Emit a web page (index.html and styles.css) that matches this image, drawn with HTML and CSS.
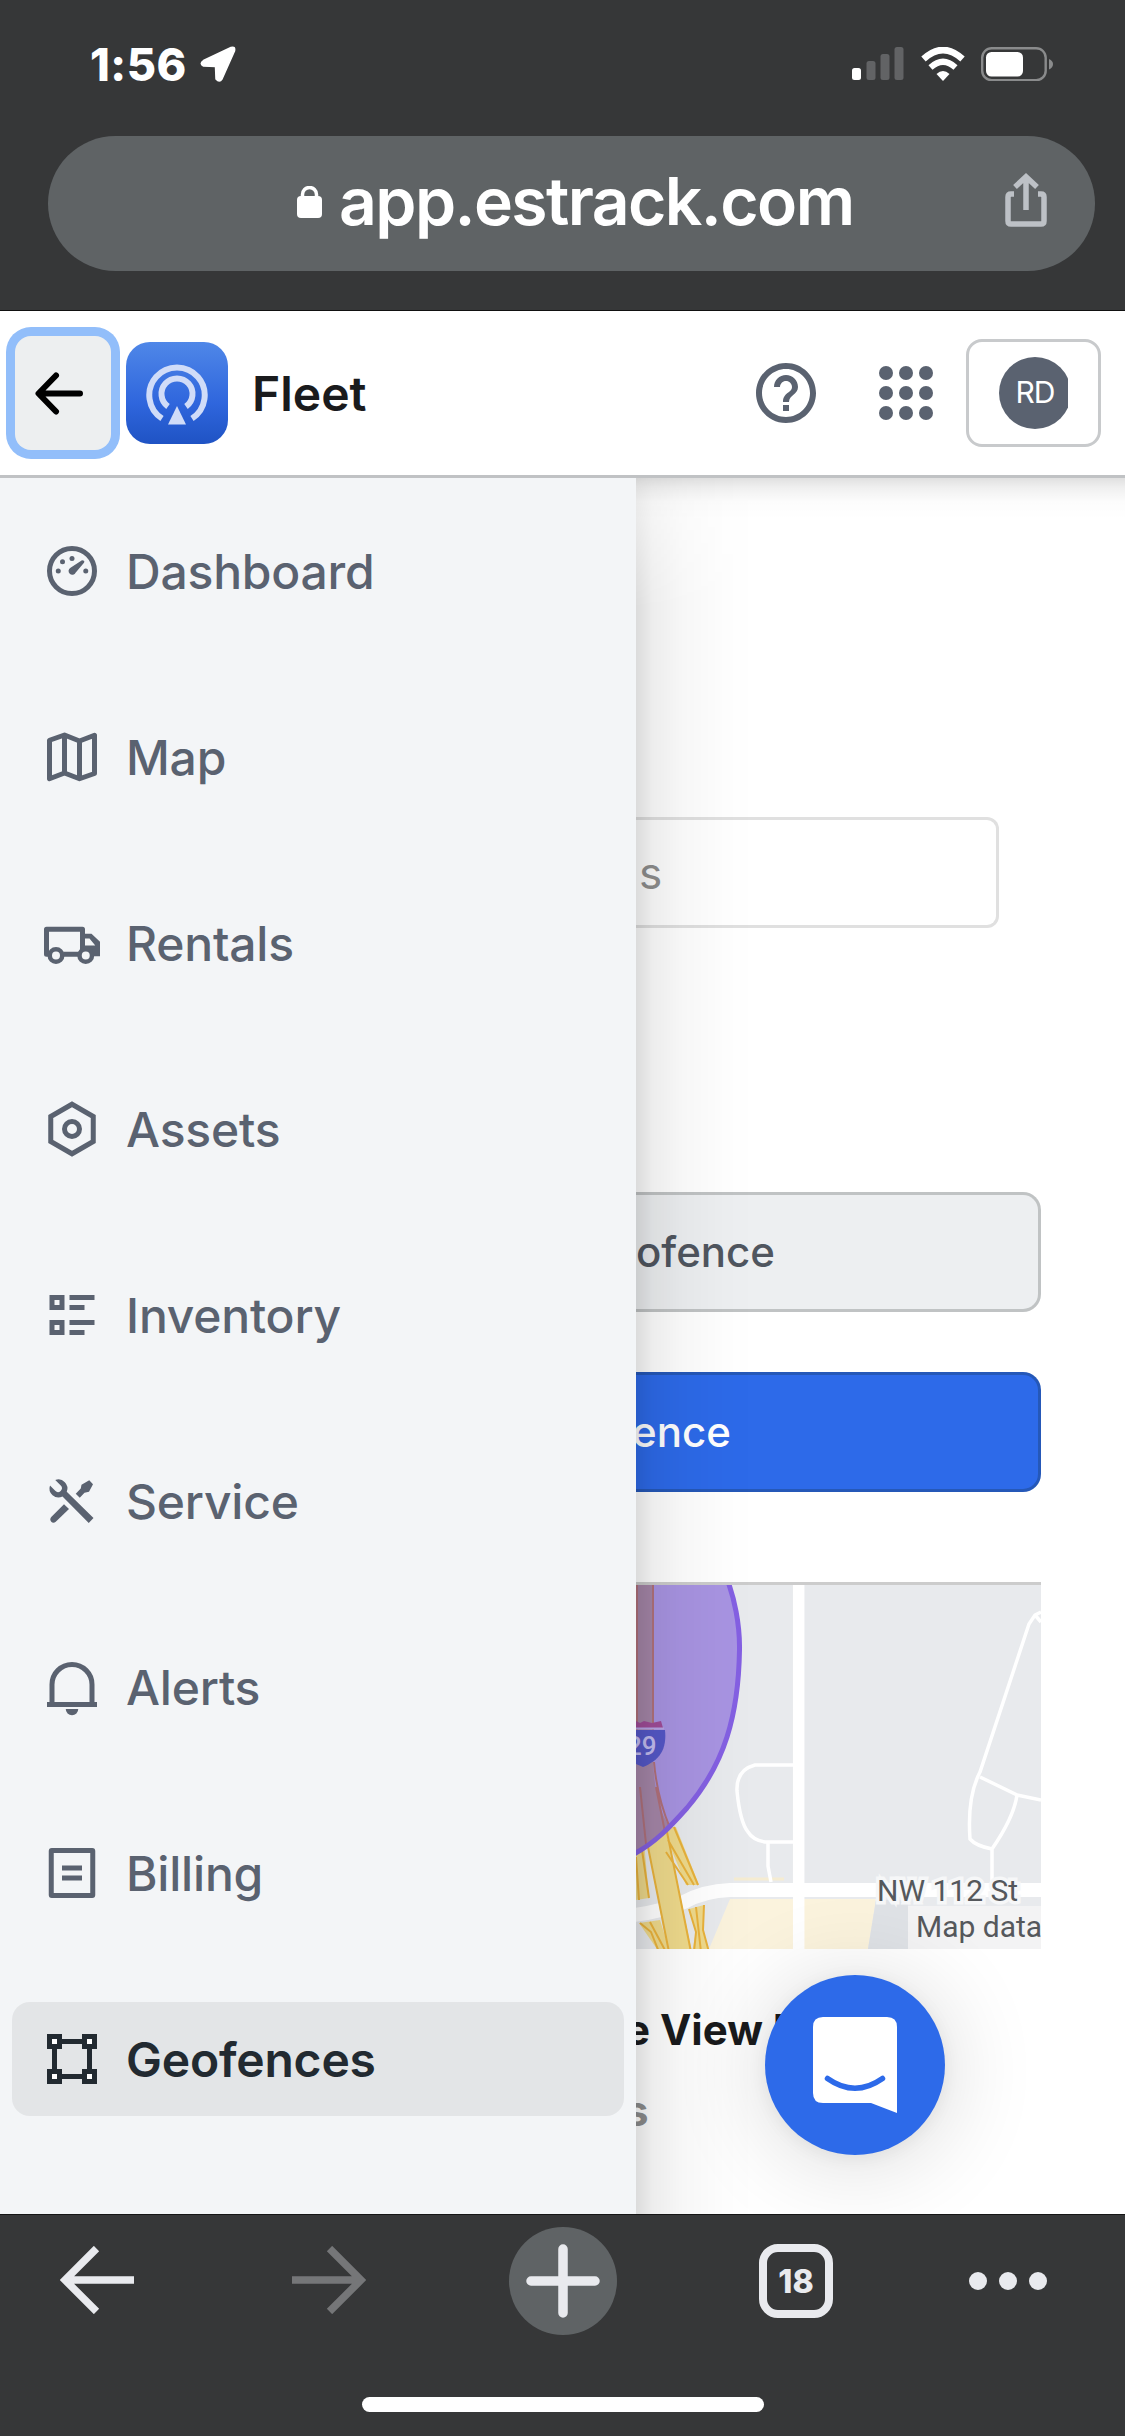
FILE: index.html
```html
<!DOCTYPE html>
<html lang="en">

<head>
    <meta charset="UTF-8">
    <meta name="viewport" content="width=device-width, initial-scale=1.0">
    <title>Fleet - Geofences</title>
    <link rel="stylesheet" href="styles.css">
</head>

<body>
    <!-- Phone status bar and address bar -->
    <div class="browser-top">
        <div class="status-bar">
            <div class="status-left">
                <span class="clock">1:56</span>
                <svg class="location" viewBox="0 0 36 36">
                    <path d="M3.500 14.500 L31 1.500 Q35.500 0 34.500 5 L22 33 Q19.500 37 16 33 L15.500 20.500 L3.500 20 Q-1 17.500 3.500 14.500Z" fill="#fff" stroke="#fff" stroke-width="1.500" stroke-linejoin="round"/>
                </svg>
            </div>
            <div class="status-right">
                <svg class="signal" viewBox="0 0 52 34">
                    <rect x="0" y="21" width="9" height="12" rx="2.5" fill="#fff"/>
                    <rect x="14.500" y="14" width="9" height="19" rx="2.500" fill="#626365"/>
                    <rect x="28.500" y="7" width="9" height="26" rx="2.500" fill="#626365"/>
                    <rect x="42.500" y="0" width="9" height="33" rx="2.500" fill="#626365"/>
                </svg>
                <svg class="wifi" viewBox="0 0 44 34" fill="none" stroke="#fff">
                    <path d="M2.500 12 Q22 -6 41.500 12" stroke-width="6.500"/>
                    <path d="M9.500 20.500 Q22 9 34.500 20.500" stroke-width="6"/>
                    <path d="M22 34 L15.500 27 Q22 21 28.500 27Z" fill="#fff" stroke="none"/>
                </svg>
                <svg class="battery" viewBox="0 0 72 34">
                    <rect x="1.200" y="1.200" width="63.500" height="32" rx="9.500" fill="none" stroke="#8a8b8c" stroke-width="2.400"/>
                    <rect x="5" y="5" width="37" height="24.500" rx="5.500" fill="#fff"/>
                    <path d="M68 12 Q72 14 72 17 Q72 20.500 68 22.500Z" fill="#8a8b8c"/>
                </svg>
            </div>
        </div>
        <div class="url-bar">
            <svg class="lock" viewBox="0 0 25 32">
                <rect x="0" y="10" width="25" height="22" rx="4" fill="#fff"/>
                <path d="M5.500 12 V8.500 a7 7 0 0 1 14 0 V12" fill="none" stroke="#fff" stroke-width="3.500"/>
            </svg>
            <span class="url">app.estrack.com</span>
            <svg class="share" viewBox="0 0 42 54" fill="none" stroke="#bdc1c6" stroke-width="5.500">
                <path d="M9 21 H6 Q3 21 3 24 V48 Q3 51 6 51 H36 Q39 51 39 48 V24 Q39 21 36 21 H33"/>
                <path d="M21 37 V5 M10 14 L21 3.800 L32 14"/>
            </svg>
        </div>
    </div>

    <!-- App header -->
    <header class="app-header">
        <button class="menu-toggle">
            <svg viewBox="0 0 48 43" fill="none" stroke="#000" stroke-width="6" stroke-linecap="round" stroke-linejoin="round">
                <path d="M45 21.500 H4 M21 3.500 L3.500 21.500 L21 39.500"/>
            </svg>
        </button>
        <div class="logo">
            <svg viewBox="0 0 62 64" fill="none" stroke="#d0dcf8" stroke-width="6">
                <path d="M16 57.500 A27.700 27.700 0 1 1 46 57.500"/>
                <path d="M22 45.500 A15.500 15.500 0 1 1 40 45.500"/>
                <path d="M31 45 L40 63.500 H22Z" fill="#d0dcf8" stroke="none"/>
            </svg>
        </div>
        <span class="brand">Fleet</span>
        <div class="header-actions">
            <svg class="help" viewBox="0 0 24 24" fill="#5a6270">
                <path d="M11 18h2v-2h-2v2zm1-16C6.480 2 2 6.480 2 12s4.480 10 10 10 10-4.480 10-10S17.520 2 12 2zm0 18c-4.410 0-8-3.590-8-8s3.590-8 8-8 8 3.590 8 8-3.590 8-8 8zm0-14c-2.210 0-4 1.790-4 4h2c0-1.100.9-2 2-2s2 .9 2 2c0 2-3 1.750-3 5h2c0-2.250 3-2.500 3-5 0-2.210-1.790-4-4-4z"/>
            </svg>
            <div class="apps">
                <i></i><i></i><i></i>
                <i></i><i></i><i></i>
                <i></i><i></i><i></i>
            </div>
            <button class="user-button">
                <span class="avatar-clip"><span class="avatar">RD</span></span>
            </button>
        </div>
    </header>

    <div class="page">
        <!-- Side navigation -->
        <nav class="sidebar">
            <a class="nav-item">
                <svg viewBox="0 0 24 24" fill="none" stroke="currentColor" stroke-width="2">
                    <circle cx="12" cy="12" r="9"/>
                    <g fill="currentColor" stroke="none">
                        <circle cx="6.500" cy="12" r="1"/>
                        <circle cx="8.200" cy="8.300" r="1"/>
                        <circle cx="12" cy="7" r="1"/>
                        <circle cx="17.500" cy="12" r="1"/>
                        <path d="M16 7.700 Q17.300 7.700 16.800 8.700 L13.500 12.600 A1.500 1.500 0 1 1 11.400 10.700Z"/>
                    </g>
                </svg>
                <span>Dashboard</span>
            </a>
            <a class="nav-item">
                <svg viewBox="0 0 24 24" fill="none" stroke="currentColor" stroke-width="2" stroke-linejoin="round">
                    <path d="M3 5.300 L9 3.200 L15 5.600 L21 3.300 V18.600 L15 20.700 L9 18.400 L3 20.700Z M9 3.200 V18.400 M15 5.600 V20.700"/>
                </svg>
                <span>Map</span>
            </a>
            <a class="nav-item">
                <svg viewBox="0 0 24 24" fill="none" stroke="currentColor">
                    <path d="M3.500 16.500 H1.800 V6.500 H16.200 V16.500 H8.500" stroke-width="2" stroke-linejoin="round"/>
                    <path d="M16 8.300 H19.800 L23.200 11.500 V17.300 H16Z M17.200 10.200 V13 H21.300 L19 10.200Z" fill="currentColor" fill-rule="evenodd" stroke="none"/>
                    <circle cx="5.600" cy="17" r="2.500" fill="#f3f5f7" stroke-width="1.800"/>
                    <circle cx="17.500" cy="17" r="2.500" fill="#f3f5f7" stroke-width="1.800"/>
                </svg>
                <span>Rentals</span>
            </a>
            <a class="nav-item">
                <svg viewBox="0 0 24 24" fill="none" stroke="currentColor" stroke-width="2">
                    <path d="M12 2.100 L20.500 7 V17 L12 21.900 L3.500 17 V7Z"/>
                    <circle cx="12" cy="12" r="3"/>
                </svg>
                <span>Assets</span>
            </a>
            <a class="nav-item">
                <svg viewBox="0 0 24 24" fill="currentColor" fill-rule="evenodd">
                    <path d="M3 4h6v6H3zM5 6v2h2V6zM11 4h10v2H11zM11 8h6v2h-6zM3 14h6v6H3zM5 16v2h2v-2zM11 14h10v2H11zM11 18h6v2h-6z"/>
                </svg>
                <span>Inventory</span>
            </a>
            <a class="nav-item">
                <svg viewBox="0 0 24 24" fill="currentColor">
                    <path d="M5.300 3.600 A3.600 3.600 0 0 1 9.900 8.300 L20.600 18.800 L18.700 20.800 L8.200 10.200 A3.600 3.600 0 0 1 3.200 5.800 L5.300 7.900 A1.500 1.500 0 0 0 7.500 5.800Z"/>
                    <path d="M13.500 9.100 L15.500 7 L15.800 5.500 L18.900 3.700 L20.400 5.300 L18.800 8.300 L17 8.700 L15.100 10.700Z"/>
                    <path d="M8.800 13.300 L10.800 15.200 L5.500 20.300 Q4.500 21.100 3.700 20.300 Q2.900 19.400 3.700 18.400Z"/>
                </svg>
                <span>Service</span>
            </a>
            <a class="nav-item">
                <svg viewBox="0 0 24 24" fill="none" stroke="currentColor" stroke-width="2">
                    <path d="M4 19 V11 a8 8 0 0 1 16 0 V19 M2 19 H22"/>
                    <path d="M9.500 20.800 H14.500 A2.500 2.500 0 0 1 9.500 20.800Z" fill="currentColor" stroke="none"/>
                </svg>
                <span>Alerts</span>
            </a>
            <a class="nav-item">
                <svg viewBox="0 0 24 24" fill="none" stroke="currentColor" stroke-width="2">
                    <rect x="3.700" y="3" width="16.600" height="18" rx="0.200"/>
                    <path d="M8 10 H16 M8 14 H16"/>
                </svg>
                <span>Billing</span>
            </a>
            <a class="nav-item active">
                <svg viewBox="0 0 24 24" fill="none" stroke="currentColor" stroke-width="2">
                    <path d="M8 5 H16 M8 19 H16 M5 8 V16 M19 8 V16"/>
                    <g fill="#fff">
                        <rect x="3" y="3" width="4" height="4"/>
                        <rect x="17" y="3" width="4" height="4"/>
                        <rect x="3" y="17" width="4" height="4"/>
                        <rect x="17" y="17" width="4" height="4"/>
                    </g>
                </svg>
                <span>Geofences</span>
            </a>
        </nav>

        <!-- Page content, partly under the open menu -->
        <main class="content">
            <div class="search-box">s</div>
            <div class="btn btn-default">ofence</div>
            <div class="btn btn-primary">ence</div>
            <svg class="map" viewBox="0 3 405 364">
                <rect width="405" height="370" fill="#e8eaed"/>
                <path d="M94 317 H157 V367 H73Z M168 317 H240 L232 367 H168Z" fill="#fbf3dd"/>
                <path d="M240 318 H272 V367 H232Z" fill="#dfe2e6"/>
                <path d="M98 297 H148" stroke="#f5ecd2" stroke-width="3"/>
                <!-- streets -->
                <g fill="none" stroke="#fff">
                    <path d="M162.700 0 V370" stroke-width="11.500"/>
                    <path d="M-2 333 Q24 330 48 320 Q68 309 94 308 H405" stroke-width="14"/>
                    <path d="M157 183 H119 Q100 188 101 209 Q104 240 112 250 Q117 258 129 260 H157 M132 260 V284 L135 300" stroke-width="3.500"/>
                    <path d="M405 30 L399 33 L393 42 L344 190 Q331 215 334 257 Q340 264 356 267 Q378 235 381 213 L344 195 M399 33 L405 40 M381 213 L405 218 M356 267 V300" stroke-width="3.500"/>
                </g>
                <!-- interstate and ramps -->
                <g fill="#efda8c">
                    <path d="M9 250 L32 370 H56 L30 245Z"/>
                    <path d="M26 245 L50 303 H63 L40 245Z"/>
                    <path d="M0 260 V318 L13 316 L8 260Z"/>
                    <path d="M53 327 L68 323 L67 348 L73 370 H56 L60 350Z"/>
                    <path d="M3 341 L24 338 L34 370 H23Z"/>
                </g>
                <path d="M9 250 L33 370 M30 245 L55 370 M38 245 L62 303 M30 270 L52 303 M32 258 L58 303 M0 275 L3 318 M6 268 L13 316 M53 327 L60 350 L58 370 M68 323 L67 348 L73 370 M60 325 L65 370 M4 341 L15 350 L23 370 M14 340 L30 370" stroke="#e9b23c" stroke-width="2" fill="none"/>
                <!-- geofence area -->
                <path d="M91 -3 C98 15 104 42 103.500 68 C103 100 99 130 91 155 C83 180 68 206 51 226 C34 245 18 262 -4 273 V-3Z" fill="#a894e2"/>
                <path d="M0 0 H17 V178 Q19 225 34 245 Q20 262 0 270Z" fill="#a586a8"/>
                <path d="M17 0 V150 M18 180 Q21 215 34 246 M1 0 V180 M4 205 L10 262 M20 205 L29 250" fill="none" stroke="#b0717b" stroke-width="2"/>
                <path d="M91 -3 C98 15 104 42 103.500 68 C103 100 99 130 91 155 C83 180 68 206 51 226 C34 245 18 262 -4 273" fill="none" stroke="#8460e2" stroke-width="5"/>
                <path d="M0 139 L4 141 L8 139 L16 141 L25 139 L27 146 H0Z" fill="#a04c98"/>
                <path d="M0 146.500 H28" stroke="#b9a5e6" stroke-width="2"/>
                <path d="M0 148 H29 C31 167 24 178 7 185 L0 182Z" fill="#5558c8"/>
                <text x="-9" y="173" class="map-shield">29</text>
                <rect x="272" y="324" width="133" height="43" fill="#f5f5f5" fill-opacity=".85"/>
                <text x="241" y="319" class="map-label street">NW 112 St</text>
                <text x="280" y="355" class="map-label">Map data</text>
            </svg>
            <div class="card-title">e View P</div>
            <div class="card-sub">s</div>
            <div class="chat-launcher">
                <svg viewBox="0 0 84 96">
                    <path d="M10 0 H74 Q84 0 84 10 V96 L58 86 H10 Q0 86 0 76 V10 Q0 0 10 0Z" fill="#fff"/>
                    <path d="M14.500 61.500 Q42 81 69.500 61.500" fill="none" stroke="#2d6ae9" stroke-width="5.500" stroke-linecap="round"/>
                </svg>
            </div>
        </main>
    </div>

    <!-- Browser toolbar -->
    <div class="browser-bottom">
        <div class="toolbar">
            <svg class="arrow" viewBox="0 0 74 68" fill="none" stroke="#e9eaee" stroke-width="7.500">
                <path d="M74 34 H6 M36.500 2.500 L5 34 L36.500 65.500"/>
            </svg>
            <svg class="arrow forward" viewBox="0 0 74 68" fill="none" stroke="#757678" stroke-width="7.500">
                <path d="M0 34 H68 M37.500 2.500 L69 34 L37.500 65.500"/>
            </svg>
            <div class="new-tab">
                <svg viewBox="0 0 74 74" stroke="#e9eaee" stroke-width="9.500" stroke-linecap="round">
                    <path d="M37 5 V69 M5 37 H69"/>
                </svg>
            </div>
            <div class="tab-count">18</div>
            <div class="more"><i></i><i></i><i></i></div>
        </div>
        <div class="home-indicator"></div>
    </div>
</body>

</html>
```
FILE: styles.css
```css
* {
    box-sizing: border-box;
}

body {
    margin: 0;
    width: 1125px;
    height: 2436px;
    overflow: hidden;
    display: flex;
    flex-direction: column;
    font-family: Inter, "Liberation Sans", sans-serif;
    background-color: #ffffff;
}

svg {
    display: block;
    flex-shrink: 0;
}

button {
    font-family: inherit;
    padding: 0;
}

/* Status bar and address bar */
.browser-top {
    height: 311px;
    background-color: #363738;
    border-bottom: 1px solid #111111;
}

.status-bar {
    height: 136px;
    padding: 36px 72px 0 90px;
    display: flex;
    justify-content: space-between;
}

.status-left,
.status-right {
    display: flex;
    height: 56px;
    align-items: center;
}

.clock {
    color: #ffffff;
    font-size: 45px;
    font-weight: 800;
    width: 110px;
    letter-spacing: 0.5px;
}

.location {
    width: 36px;
    height: 36px;
}

.signal {
    width: 52px;
    height: 34px;
    margin-right: 17px;
}

.wifi {
    width: 44px;
    height: 34px;
    margin-right: 16px;
}

.battery {
    width: 72px;
    height: 34px;
}

.url-bar {
    height: 135px;
    margin: 0 30px 0 48px;
    padding: 0 48px 0 249px;
    border-radius: 68px;
    background-color: #5f6365;
    display: flex;
    align-items: center;
}

.lock {
    width: 25px;
    height: 32px;
    margin-right: 17px;
    margin-bottom: 4px;
}

.url {
    color: #ffffff;
    font-size: 66px;
    font-weight: 600;
    letter-spacing: -1.6px;
    white-space: nowrap;
    margin-bottom: 5px;
}

.share {
    width: 42px;
    height: 54px;
    margin-left: auto;
    margin-bottom: 8px;
}

/* App header */
.app-header {
    position: relative;
    z-index: 3;
    height: 167px;
    padding: 0 24px 0 15px;
    background-color: #ffffff;
    border-bottom: 3px solid #c0c2c4;
    display: flex;
    align-items: center;
}

.menu-toggle {
    width: 96px;
    height: 114px;
    border: none;
    border-radius: 16px;
    background-color: #edeff0;
    box-shadow: 0 0 0 9px #92befa;
    display: flex;
    align-items: center;
    padding-left: 20px;
}

.menu-toggle svg {
    width: 48px;
    height: 43px;
}

.logo {
    width: 102px;
    height: 102px;
    margin-left: 15px;
    border-radius: 24px;
    background: linear-gradient(#4f87e8, #2f66dd 60%, #1f53c4);
    display: flex;
    align-items: center;
    justify-content: center;
}

.logo svg {
    width: 62px;
    height: 64px;
}

.brand {
    margin-left: 24px;
    font-size: 48px;
    font-weight: 600;
    color: #1a1b1d;
}

.header-actions {
    display: flex;
    align-items: center;
    margin-left: auto;
}

.help {
    width: 72px;
    height: 72px;
}

.apps {
    display: grid;
    grid-template-columns: repeat(3, 14px);
    gap: 6px;
    margin: 0 33px 0 57px;
}

.apps i {
    width: 14px;
    height: 14px;
    border-radius: 50%;
    background-color: #5a6270;
}

.user-button {
    width: 135px;
    height: 108px;
    border: 3px solid #c8cacc;
    border-radius: 16px;
    background-color: #ffffff;
    padding-left: 30px;
}

.avatar-clip {
    display: block;
    width: 69px;
    overflow: hidden;
}

.avatar {
    display: flex;
    align-items: center;
    justify-content: center;
    width: 72px;
    height: 72px;
    border-radius: 50%;
    background-color: #5a6270;
    color: #ffffff;
    font-size: 30px;
    letter-spacing: -1px;
    padding-bottom: 2px;
}

/* Page */
.page {
    height: 1736px;
    display: flex;
}

.sidebar {
    position: relative;
    z-index: 2;
    width: 636px;
    padding: 36px 12px;
    background-color: #f3f5f7;
    display: flex;
    flex-direction: column;
    gap: 72px;
}

/* Shadow cast by the menu, weaker near the header */
.sidebar::after {
    content: "";
    position: absolute;
    top: 0;
    left: 100%;
    width: 120px;
    height: 100%;
    background: linear-gradient(90deg, rgba(0, 0, 0, 0.14), rgba(0, 0, 0, 0.07) 14%, rgba(0, 0, 0, 0.03) 40%, rgba(0, 0, 0, 0.008) 75%, transparent);
    -webkit-mask-image: linear-gradient(rgba(0, 0, 0, 0.4), #000 130px);
    mask-image: linear-gradient(rgba(0, 0, 0, 0.4), #000 130px);
}

.nav-item {
    height: 114px;
    padding-left: 30px;
    border-radius: 18px;
    display: flex;
    align-items: center;
    gap: 24px;
    color: #5a6270;
    font-size: 48px;
    font-weight: 500;
    letter-spacing: -0.2px;
}

.nav-item svg {
    width: 60px;
    height: 60px;
}

.nav-item.active {
    background-color: #e3e5e7;
    color: #222a31;
    font-weight: 600;
}

.content {
    position: relative;
    width: 489px;
    padding-top: 339px;
    background: linear-gradient(rgba(0, 0, 0, 0.12), rgba(0, 0, 0, 0.06) 10px, rgba(0, 0, 0, 0.012) 24px, transparent 42px);
}

.search-box {
    width: 363px;
    height: 111px;
    border: 3px solid #e0e0e0;
    border-left: none;
    border-radius: 0 12px 12px 0;
    padding-left: 3px;
    display: flex;
    align-items: center;
    font-size: 44px;
    color: #8f8f8f;
}

.btn {
    width: 405px;
    height: 120px;
    border: 3px solid;
    border-left: none;
    border-radius: 0 18px 18px 0;
    padding-bottom: 2px;
    display: flex;
    align-items: center;
    font-size: 42px;
    font-weight: 500;
}

.btn-default {
    margin-top: 264px;
    background-color: #edeff1;
    border-color: #c0c3c4;
    color: #50565f;
}

.btn-primary {
    margin-top: 60px;
    background-color: #2d6ae9;
    border-color: #2558b8;
    color: #ffffff;
    text-indent: -4px;
}

.map {
    width: 405px;
    height: 367px;
    margin-top: 90px;
    border-top: 3px solid #cccccc;
}

.map-label {
    font: 30px Roboto, sans-serif;
    fill: #55585c;
}

.street {
    paint-order: stroke;
    stroke: #f6f7f8;
    stroke-width: 7px;
}

.map-shield {
    font: 500 26px Roboto, sans-serif;
    fill: #c3bdf0;
}

.card-title {
    margin-top: 56px;
    height: 50px;
    line-height: 50px;
    font-size: 42px;
    font-weight: 700;
    color: #1a1b1d;
    text-indent: -11px;
    white-space: nowrap;
    overflow: hidden;
}

.card-sub {
    margin-top: 31px;
    height: 50px;
    line-height: 50px;
    font-size: 42px;
    font-weight: 700;
    color: #8e8e8e;
    text-indent: -11px;
    overflow: hidden;
}

/* Chat button floats over the content */
.chat-launcher {
    position: absolute;
    right: 180px;
    bottom: 59px;
    width: 180px;
    height: 180px;
    border-radius: 50%;
    background-color: #2d6ae9;
    box-shadow: 0 3px 18px rgba(0, 0, 0, 0.06), 0 6px 96px rgba(0, 0, 0, 0.16);
    display: flex;
    align-items: center;
    justify-content: center;
}

.chat-launcher svg {
    width: 84px;
    height: 96px;
}

/* Browser toolbar */
.browser-bottom {
    position: relative;
    z-index: 4;
    height: 222px;
    padding: 12px 78px 0 60px;
    background-color: #363738;
    border-top: 1px solid #151515;
}

.toolbar {
    height: 108px;
    display: flex;
    align-items: center;
}

.arrow {
    width: 74px;
    height: 68px;
    margin-bottom: 2px;
}

.forward {
    margin-left: 158px;
}

.new-tab {
    width: 108px;
    height: 108px;
    margin: 0 142px 0 143px;
    border-radius: 50%;
    background-color: #5f6365;
    display: flex;
    align-items: center;
    justify-content: center;
}

.new-tab svg {
    width: 74px;
    height: 74px;
}

.tab-count {
    width: 74px;
    height: 74px;
    margin-right: 136px;
    border: 8px solid #e9eaee;
    border-radius: 19px;
    display: flex;
    align-items: center;
    justify-content: center;
    color: #e9eaee;
    font-size: 32px;
    font-weight: 800;
}

.more {
    display: flex;
    gap: 12px;
}

.more i {
    width: 18px;
    height: 18px;
    border-radius: 50%;
    background-color: #e9eaee;
}

.home-indicator {
    width: 402px;
    height: 15px;
    margin: 62px 0 0 302px;
    border-radius: 8px;
    background-color: #ffffff;
}
```
